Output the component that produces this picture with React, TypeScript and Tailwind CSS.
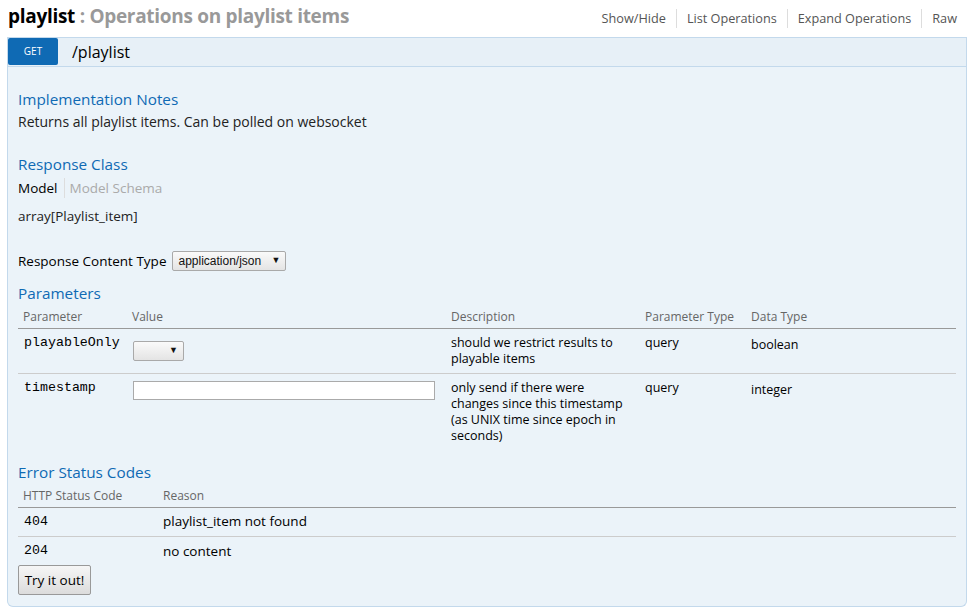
import * as React from "react";

const params = [
  {
    name: "playableOnly",
    kind: "select",
    desc: "should we restrict results to playable items",
    paramType: "query",
    dataType: "boolean",
    h: "h-[45px]",
  },
  {
    name: "timestamp",
    kind: "input",
    desc: "only send if there were changes since this timestamp (as UNIX time since epoch in seconds)",
    paramType: "query",
    dataType: "integer",
    h: "h-[72px]",
  },
];

const errors = [
  { code: "404", reason: "playlist_item not found" },
  { code: "204", reason: "no content" },
];

function SelectBox({ children, className }: { children?: React.ReactNode; className?: string }) {
  return (
    <span
      className={
        "inline-flex h-[20px] items-center justify-between rounded-[2px] border border-[#a9a9a9] bg-gradient-to-b from-[#fafafa] to-[#e4e4e4] px-[5px] text-[12px] text-[#111] font-['Liberation_Sans',Arial,sans-serif] " +
        (className ?? "")
      }
    >
      <span>{children}</span>
      <span className="ml-[6px] text-[9px]">▼</span>
    </span>
  );
}

export default function App() {
  return (
    <div className="min-h-[614px] bg-white font-['Open_Sans',sans-serif] text-[13.5px] text-[#222]">
      {/* resource header */}
      <div className="flex h-[37px] items-center justify-between pb-[4px] pl-[8px] pr-[19px]">
        <h2 className="text-[19px] font-bold leading-none tracking-[-0.3px]">
          <span className="text-black">playlist</span>
          <span className="text-[#999]"> : Operations on playlist items</span>
        </h2>
        <div className="flex items-center pt-[4px] text-[12.7px] text-[#555]">
          <span className="pr-[10px]">Show/Hide</span>
          <span className="border-l border-[#ddd] px-[10px]">List Operations</span>
          <span className="border-l border-[#ddd] px-[10px]">Expand Operations</span>
          <span className="border-l border-[#ddd] pl-[10px]">Raw</span>
        </div>
      </div>

      {/* operation */}
      <div className="ml-[7px] w-[960px]">
        <div className="flex h-[30px] items-center border border-[#c3d9ec] bg-[#e7f0f7]">
          <span className="flex h-[27px] w-[50px] items-center justify-center self-start rounded-[2px] bg-[#0f6ab4] text-[10px] text-white">
            GET
          </span>
          <span className="ml-[14px] text-[16px] text-black">/playlist</span>
        </div>

        <div className="rounded-b-[6px] border border-t-0 border-[#c3d9ec] bg-[#ebf3f9] px-[10px] pt-[20px] pb-[11px]">
          <h4 className="text-[15.3px] leading-[24px] text-[#0f6ab4]">Implementation Notes</h4>
          <p className="text-[14px] leading-[22px]">Returns all playlist items. Can be polled on websocket</p>

          <h4 className="mt-[19px] text-[15.3px] leading-[24px] text-[#0f6ab4]">Response Class</h4>
          <div className="flex h-[24px] items-center">
            <span className="pr-[6px] text-black">Model</span>
            <span className="border-l border-[#ddd] pl-[5px] text-[#aaa]">Model Schema</span>
          </div>
          <p className="mt-[4px] leading-[24px]">array[Playlist_item]</p>

          <div className="mt-[21px] flex h-[24px] items-center">
            <span className="mr-[6px] text-black">Response Content Type</span>
            <SelectBox className="w-[114px]">application/json</SelectBox>
          </div>

          <h4 className="mt-[8px] text-[15.3px] leading-[24px] text-[#0f6ab4]">Parameters</h4>
          <table className="w-full border-collapse text-left">
            <thead>
              <tr className="h-[23px] border-b border-[#999] text-[12px] text-[#666]">
                <th className="w-[109px] px-[5px] pt-[2px] font-normal">Parameter</th>
                <th className="w-[319px] px-[5px] pt-[2px] font-normal">Value</th>
                <th className="w-[194px] px-[5px] pt-[2px] font-normal">Description</th>
                <th className="w-[106px] px-[5px] pt-[2px] font-normal">Parameter Type</th>
                <th className="px-[5px] pt-[2px] font-normal">Data Type</th>
              </tr>
            </thead>
            <tbody>
              {params.map((p, i) => (
                <tr key={p.name} className={`${p.h} align-top ${i === 0 ? "border-b border-[#ccc]" : ""}`}>
                  <td className="px-[6px] pt-[6px] font-['Liberation_Mono',monospace] text-[13.3px] leading-[16px] text-black">
                    {p.name}
                  </td>
                  <td className="px-[5px] pt-[7px]">
                    {p.kind === "select" ? (
                      <SelectBox className="ml-[1px] h-[19px] w-[51px]" />
                    ) : (
                      <span className="ml-[1px] block h-[19px] w-[302px] border border-[#aaa] bg-white" />
                    )}
                  </td>
                  <td className="px-[5px] pt-[6px] text-[12.5px] leading-[16px] text-black">
                    <div className="w-[172px]">{p.desc}</div>
                  </td>
                  <td className="px-[5px] pt-[6px] text-[12.5px] leading-[16px] text-black">{p.paramType}</td>
                  <td className="px-[5px] pt-[8px] text-[12.5px] leading-[16px] text-black">{p.dataType}</td>
                </tr>
              ))}
            </tbody>
          </table>

          <h4 className="mt-[15px] text-[15.3px] leading-[24px] text-[#0f6ab4]">Error Status Codes</h4>
          <table className="w-full border-collapse text-left">
            <thead>
              <tr className="h-[23px] border-b border-[#999] text-[12px] text-[#666]">
                <th className="w-[140px] px-[5px] pt-[2px] font-normal">HTTP Status Code</th>
                <th className="px-[5px] pt-[2px] font-normal">Reason</th>
              </tr>
            </thead>
            <tbody>
              {errors.map((e, i) => (
                <tr key={e.code} className={i === 0 ? "h-[29px] border-b border-[#ccc]" : "h-[29px]"}>
                  <td className="px-[6px] font-['Liberation_Mono',monospace] text-[13.3px] text-black">{e.code}</td>
                  <td className="px-[5px] text-[13.5px] text-black">{e.reason}</td>
                </tr>
              ))}
            </tbody>
          </table>

          <button className="block h-[30px] w-[73px] rounded-[2px] border border-[#999] bg-gradient-to-b from-[#f6f6f6] to-[#dcdcdc] text-[13.5px] text-black">
            Try it out!
          </button>
        </div>
      </div>
    </div>
  );
}
